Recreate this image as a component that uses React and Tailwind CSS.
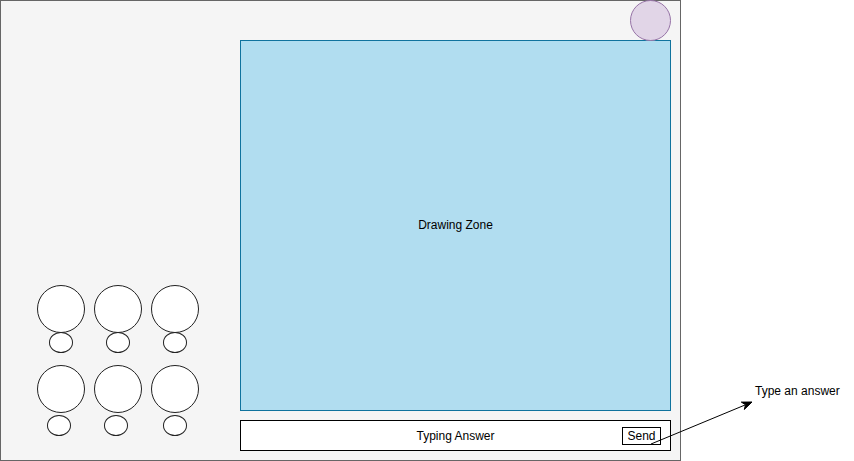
import React from "react";

function Group({ shift = "" }) {
  return (
    <div className="flex w-[48px] flex-col items-center">
      <div className="h-[48px] w-[48px] rounded-full border border-[#222] bg-white" />
      <div className={"-mt-[1px] h-[21px] w-[24px] rounded-[50%] border border-[#222] bg-white " + shift} />
    </div>
  );
}

function Group2({ shift = "" }) {
  return (
    <div className="flex w-[48px] flex-col items-center">
      <div className="h-[48px] w-[48px] rounded-full border border-[#222] bg-white" />
      <div className={"mt-[2px] h-[21px] w-[24px] rounded-[50%] border border-[#222] bg-white " + shift} />
    </div>
  );
}

export default function App() {
  return (
    <div className="relative h-[461px] w-[854px] bg-white font-['Liberation_Sans',Arial,sans-serif] text-[12px] leading-[14px] text-black">
      <div className="flex h-[461px] w-[681px] border border-[#666666] bg-[#f5f5f5]">
        <div className="flex w-[239px] flex-col pl-[36px] pt-[284px]">
          <div className="flex gap-[9px]">
            <Group />
            <Group />
            <Group />
          </div>
          <div className="mt-[12px] flex gap-[9px]">
            <Group2 shift="-translate-x-[2px]" />
            <Group2 shift="-translate-x-[2px]" />
            <Group2 />
          </div>
        </div>
        <div className="flex w-[431px] flex-col pt-[39px]">
          <div className="flex h-[371px] items-center justify-center border border-[#10739e] bg-[#b1ddf0] pb-[1px]">
            <span>Drawing Zone</span>
          </div>
          <div className="mt-[9px] flex h-[31px] items-center border border-black bg-white">
            <span className="flex-1 pl-[48px] text-center">Typing Answer</span>
            <div className="mr-[9px] mt-[1px] flex h-[18px] w-[39px] items-center justify-center border border-black">
              Send
            </div>
          </div>
        </div>
      </div>
      <div className="absolute left-[630px] top-0 h-[41px] w-[41px] rounded-full border border-[#9673a6] bg-[#e1d5e7]" />
      <svg className="pointer-events-none absolute left-0 top-0" width="854" height="461">
        <line x1="651" y1="444" x2="745" y2="405" stroke="#000" strokeWidth="1" />
        <polygon points="752,402 744.3,409.5 745.5,404.7 741.3,402.1" fill="#000" stroke="#000" strokeWidth="1" />
      </svg>
      <div className="absolute left-[755px] top-[384px] whitespace-nowrap">Type an answer</div>
    </div>
  );
}
